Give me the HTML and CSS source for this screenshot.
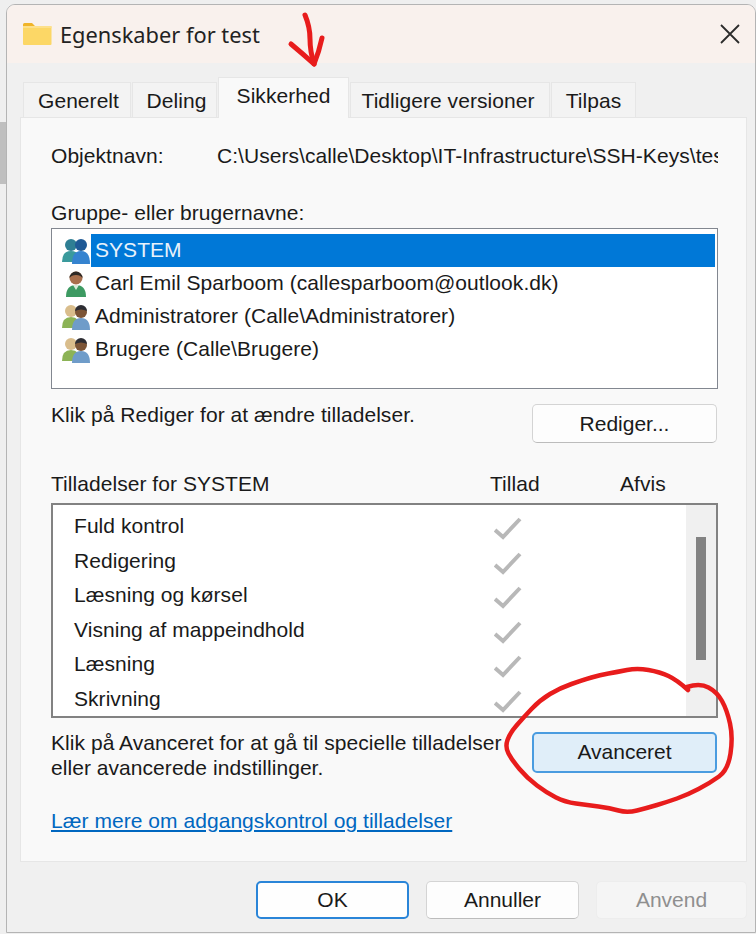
FILE: index.html
```html
<!DOCTYPE html>
<html lang="da">
<head>
<meta charset="utf-8">
<title>Egenskaber for test</title>
<link rel="stylesheet" href="styles.css">
</head>
<body>
<div class="desktop">
  <div class="backdrop-band"></div>
  <div class="window">
    <header class="titlebar">
      <svg class="folder" width="30" height="24" viewBox="0 0 30 24"><path d="M1 2.5A1.5 1.5 0 0 1 2.5 1H10l3 3H1z" fill="#f0b429"/><path d="M1 4h27.500a1 1 0 0 1 1 1v17a1 1 0 0 1-1 1H2a1 1 0 0 1-1-1z" fill="#fcd766"/><path d="M1 4h28.500v2H1z" fill="#fde08a"/></svg>
      <span class="title">Egenskaber for test</span>
      <svg class="close" width="20" height="20" viewBox="0 0 20 20"><path d="M1 1l18 18M19 1L1 19" fill="none" stroke="#2b2b2b" stroke-width="1.800"/></svg>
    </header>
    <nav class="tabs">
      <div class="tab tab-generelt">Generelt</div>
      <div class="tab tab-deling">Deling</div>
      <div class="tab tab-active">Sikkerhed</div>
      <div class="tab tab-tidligere">Tidligere versioner</div>
      <div class="tab tab-tilpas">Tilpas</div>
    </nav>
    <main class="panel">
      <div class="object-row">
        <span class="object-label">Objektnavn:</span>
        <span class="object-path">C:\Users\calle\Desktop\IT-Infrastructure\SSH-Keys\test</span>
      </div>
      <div class="group-label">Gruppe- eller brugernavne:</div>
      <div class="listbox">
        <div class="user-row">
          <svg class="user-icon" width="30" height="28" viewBox="0 0 30 28"><use href="#p-back-sys"/><use href="#p-front-sys"/></svg>
          <span class="user-name selected">SYSTEM</span>
        </div>
        <div class="user-row">
          <svg class="user-icon" width="30" height="28" viewBox="0 0 30 28"><path d="M5 27q0-12 10-12t10 12z" fill="#3d9a62"/><path d="M12 15l3 5 3-5z" fill="#d9ead9"/><circle cx="15" cy="8" r="6.500" fill="#a86f4c"/><path d="M8.500 8a6.500 6.500 0 0 1 13 0q-2-3-6.500-3t-6.500 3z" fill="#2e2a26"/></svg>
          <span class="user-name">Carl Emil Sparboom (callesparboom@outlook.dk)</span>
        </div>
        <div class="user-row">
          <svg class="user-icon" width="30" height="28" viewBox="0 0 30 28"><use href="#p-back-grp"/><use href="#p-front-grp"/></svg>
          <span class="user-name">Administratorer (Calle\Administratorer)</span>
        </div>
        <div class="user-row">
          <svg class="user-icon" width="30" height="28" viewBox="0 0 30 28"><use href="#p-back-grp"/><use href="#p-front-grp"/></svg>
          <span class="user-name">Brugere (Calle\Brugere)</span>
        </div>
      </div>
      <div class="action-row edit-row">
        <span>Klik på Rediger for at ændre tilladelser.</span>
        <button class="btn btn-side">Rediger...</button>
      </div>
      <div class="perm-head">
        <span class="perm-head-name">Tilladelser for SYSTEM</span>
        <span class="perm-head-allow">Tillad</span>
        <span class="perm-head-deny">Afvis</span>
      </div>
      <div class="permbox">
        <div class="perm-rows">
          <div class="perm-row"><span class="perm-name">Fuld kontrol</span><svg class="check" width="28" height="24" viewBox="0 0 28 24"><use href="#check"/></svg></div>
          <div class="perm-row"><span class="perm-name">Redigering</span><svg class="check" width="28" height="24" viewBox="0 0 28 24"><use href="#check"/></svg></div>
          <div class="perm-row"><span class="perm-name">Læsning og kørsel</span><svg class="check" width="28" height="24" viewBox="0 0 28 24"><use href="#check"/></svg></div>
          <div class="perm-row"><span class="perm-name">Visning af mappeindhold</span><svg class="check" width="28" height="24" viewBox="0 0 28 24"><use href="#check"/></svg></div>
          <div class="perm-row"><span class="perm-name">Læsning</span><svg class="check" width="28" height="24" viewBox="0 0 28 24"><use href="#check"/></svg></div>
          <div class="perm-row"><span class="perm-name">Skrivning</span><svg class="check" width="28" height="24" viewBox="0 0 28 24"><use href="#check"/></svg></div>
        </div>
        <div class="scrollbar"><div class="thumb"></div></div>
      </div>
      <div class="action-row advanced-row">
        <span class="advanced-text">Klik på Avanceret for at gå til specielle tilladelser<br>eller avancerede indstillinger.</span>
        <button class="btn btn-side btn-hover">Avanceret</button>
      </div>
      <a class="help-link" href="#">Lær mere om adgangskontrol og tilladelser</a>
    </main>
    <footer class="footer">
      <button class="btn btn-foot btn-default">OK</button>
      <button class="btn btn-foot">Annuller</button>
      <button class="btn btn-foot btn-disabled">Anvend</button>
    </footer>
  </div>
  <svg class="annotation" width="756" height="934" viewBox="0 0 756 934">
    <defs>
      <g id="p-back-sys"><path d="M1 25q0-11 9-11t9 11z" fill="#3a9a9c"/><circle cx="10" cy="8" r="6" fill="#2f7f94"/></g>
      <g id="p-front-sys"><path d="M11 27q0-13 9-13t9 13z" fill="#3583cf"/><circle cx="20" cy="8" r="6" fill="#1f5a96"/></g>
      <g id="p-back-grp"><path d="M1 25q0-11 9-11t9 11z" fill="#8cb356"/><circle cx="10" cy="8" r="6" fill="#d9bd8c"/></g>
      <g id="p-front-grp"><path d="M11 27q0-12 9-12t9 12z" fill="#6f9cc9"/><circle cx="20" cy="9" r="6" fill="#7c5537"/><path d="M14 8a6 6 0 0 1 12 0q-6-3-12 0z" fill="#2d2d33"/></g>
      <path id="check" d="M1 13l8 7L26 2" fill="none" stroke="#b8b8b8" stroke-width="4"/>
    </defs>
    <path d="M305 15q5 12 5 24t4 25" fill="none" stroke="#e81c1c" stroke-width="5" stroke-linecap="round"/>
    <path d="M291 44q12 10 23 20q5-12 8-26" fill="none" stroke="#e81c1c" stroke-width="5" stroke-linecap="round" stroke-linejoin="round"/>
    <path d="M688 690Q677 680 668.500 676Q660 672 648.500 670Q637 668 627 670Q617 672 608.500 673.500Q600 675 591.500 677.500Q583 680 571.500 684Q560 688 550 694Q540 700 531.500 709Q523 718 516.500 725.500Q510 733 507.500 740Q505 747 508.500 753.500Q512 760 519.500 769Q527 778 537 785.500Q547 793 556 797.500Q565 802 576 803.500Q587 805 598.500 806.500Q610 808 618.500 810.500Q627 813 637 810.500Q647 808 657 805Q667 802 677 798.500Q687 795 698.500 789Q710 783 719 776.500Q728 770 730.500 753.500Q733 737 730 723.500Q727 710 722 701Q717 692 708.500 687.500Q700 683 687 687" fill="none" stroke="#e81c1c" stroke-width="4.500" stroke-linecap="round"/>
  </svg>
</div>
</body>
</html>
```
FILE: styles.css
```css
* { box-sizing: border-box; }
html, body { margin: 0; padding: 0; }
body {
  width: 756px;
  height: 934px;
  overflow: hidden;
  background: #efefef;
  font-family: "Liberation Sans", Arial, sans-serif;
  font-size: 21px;
  letter-spacing: 0.05px;
  color: #1a1a1a;
}
.desktop { position: relative; width: 756px; height: 934px; padding: 4px 0 0 6px; }
.backdrop-band { position: absolute; left: 0; top: 122px; width: 6px; height: 62px; background: #bfbfbf; }
.annotation { position: absolute; left: 0; top: 0; pointer-events: none; }

.window {
  position: relative;
  width: 750px;
  height: 929px;
  background: #f0f0f0;
  border: 1px solid #b4b4b4;
  border-radius: 9px 9px 0 0;
  overflow: hidden;
}
.titlebar {
  display: flex;
  align-items: center;
  height: 58px;
  padding: 0 15px 0 15px;
  background: #f9f1ed;
}
.folder { margin-right: 8px; }
.title { flex: 1; font-family: "Noto Sans", sans-serif; font-size: 21.800px; letter-spacing: 0; color: #222; }

.tabs { display: flex; align-items: flex-end; height: 54px; padding-left: 16px; }
.tab {
  display: flex;
  align-items: center;
  justify-content: center;
  height: 35px;
  background: #f3f3f3;
  border: 1px solid #e6e6e6;
  border-bottom: 0;
  margin-right: 1px;
  padding-top: 1px;
}
.tab-generelt { width: 108px; padding-left: 3px; }
.tab-deling { width: 85px; padding-left: 4px; }
.tab-active {
  width: 131px;
  height: 41px;
  background: #f9f9f9;
  margin-bottom: -1px;
  position: relative;
  z-index: 1;
  padding: 0 0 5px;
}
.tab-tidligere { width: 200px; padding-right: 4px; }
.tab-tilpas { width: 85px; }

.panel {
  display: flex;
  flex-direction: column;
  width: 727px;
  height: 745px;
  margin-left: 13px;
  padding: 0 28px 0 30px;
  background: #f9f9f9;
  border: 1px solid #e6e6e6;
}
.object-row { display: flex; height: 26px; margin-top: 25px; align-items: center; white-space: nowrap; }
.object-label { width: 166px; flex: none; }
.object-path { width: 502px; overflow: hidden; }
.group-label { height: 26px; line-height: 26px; margin-top: 31px; }

.listbox {
  display: flex;
  flex-direction: column;
  height: 161px;
  margin-top: 2px;
  padding: 5px 2px 0 9px;
  background: #fff;
  border: 1px solid #828790;
}
.user-row { display: flex; align-items: center; height: 33px; }
.user-icon { flex: none; }
.user-name { padding: 0 4px 1px; line-height: 32px; flex: 1; white-space: nowrap; }
.selected { background: #0078d7; color: #e8f2fb; }

.action-row { display: flex; align-items: center; justify-content: space-between; }
.edit-row { height: 39px; margin-top: 15px; padding-right: 1px; }
.edit-row span { margin-top: -18px; }
.btn {
  font: inherit;
  color: inherit;
  background: #fdfdfd;
  border: 1px solid #d4d4d4;
  border-bottom-color: #bcbcbc;
  border-radius: 5px;
  padding: 0;
}
.btn-side { width: 185px; height: 39px; }
.btn-hover { height: 41px; background: #e0eef9; border: 2px solid #4a9ce0; }

.perm-head { position: relative; height: 26px; line-height: 26px; margin-top: 28px; display: flex; }
.perm-head-name { width: 439px; flex: none; }
.perm-head-allow { width: 130px; flex: none; }

.permbox {
  display: flex;
  height: 215px;
  margin-top: 6px;
  background: #fff;
  border: 2px solid #828282;
  overflow: hidden;
}
.perm-rows { flex: 1; padding: 4px 0 0 21px; }
.perm-row { display: flex; align-items: center; height: 34.500px; }
.perm-name { width: 420px; flex: none; }
.check { flex: none; margin-top: 6px; }
.scrollbar { flex: none; width: 30px; padding: 32px 0 0 10px; background: #f0f0f0; }
.thumb { width: 10px; height: 123px; background: #828282; }

.advanced-row { height: 50px; margin-top: 9px; padding-right: 1px; }
.advanced-text { line-height: 25px; margin-top: 5px; }
.help-link { margin-top: 31px; height: 26px; line-height: 26px; color: #0067c0; text-decoration: underline; }

.footer { display: flex; gap: 17px; padding: 19px 0 0 249px; }
.btn-foot { width: 153px; height: 38px; }
.btn-default { background: #fefefe; border: 2px solid #2a85d8; }
.btn-disabled { width: 151px; background: #f5f5f5; border-color: #ededed; color: #8f8f8f; }
```
